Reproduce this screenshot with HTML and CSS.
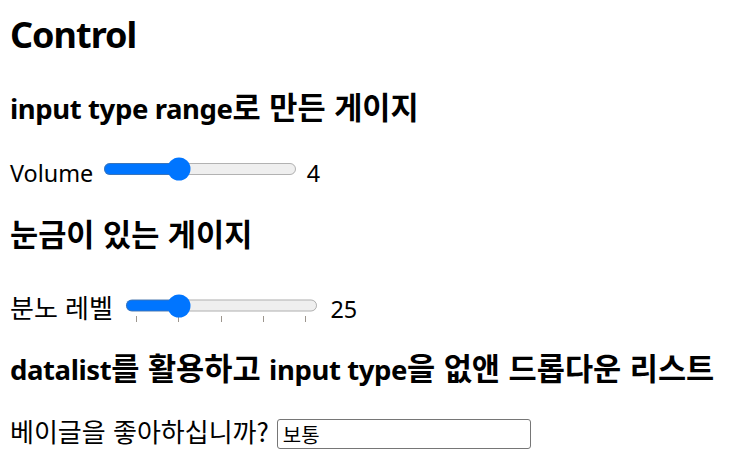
FILE: index.html
```html
<!DOCTYPE html>
<html lang="ko">
<head>
<meta charset="utf-8">
<title>Control</title>
<link rel="stylesheet" href="styles.css">
</head>
<body>
<h1 class="title" lang="en">Control</h1>

<h3 class="section section-first"><span class="en" lang="en">input type range</span>로 만든 게이지</h3>
<div class="row row-volume">
  <label class="label" for="volume"><span class="en" lang="en">Volume</span></label>
  <input class="range range-volume" type="range" id="volume" min="1" max="9" value="4">
  <output class="value" for="volume"><span class="en">4</span></output>
</div>

<h3 class="section section-ticks">눈금이 있는 게이지</h3>
<div class="row row-anger">
  <label class="label" for="anger">분노 레벨</label>
  <input class="range range-ticks" type="range" id="anger" min="0" max="100" value="25" list="levels">
  <datalist id="levels">
    <option value="0"></option>
    <option value="25"></option>
    <option value="50"></option>
    <option value="75"></option>
    <option value="100"></option>
  </datalist>
  <output class="value" for="anger"><span class="en">25</span></output>
</div>

<h3 class="section section-list"><span class="en" lang="en">datalist</span>를 활용하고 <span class="en" lang="en">input type</span>을 없앤 드롭다운 리스트</h3>
<div class="row row-bagel">
  <label class="label" for="bagel">베이글을 좋아하십니까?</label>
  <input class="text" type="text" id="bagel" list="answers" value="보통">
  <datalist id="answers">
    <option value="매우 좋음"></option>
    <option value="좋음"></option>
    <option value="보통"></option>
    <option value="싫음"></option>
  </datalist>
</div>
</body>
</html>
```

FILE: styles.css
```css
html,
body {
  margin: 0;
  padding: 0;
  background: #ffffff;
}

body {
  padding: 8px 10px 0;
  font-family: "Noto Sans CJK KR", "Noto Sans", sans-serif;
  font-size: 26px;
  color: #000000;
}

.en {
  font-family: "Noto Sans", "Noto Sans CJK KR", sans-serif;
  font-size: 0.9em;
  line-height: 1;
}

.title {
  margin: 0;
  padding-top: 3px;
  font-family: "Noto Sans", sans-serif;
  font-size: 36px;
  line-height: 48px;
  font-weight: 700;
  letter-spacing: -1px;
}

.section {
  margin: 0;
  font-size: 30.6px;
  line-height: 40px;
  font-weight: 700;
  white-space: nowrap;
}

.section .en {
  letter-spacing: -0.015em;
}

.section-first {
  margin-top: 27px;
}

.section-ticks {
  margin-top: 24px;
}

.section-list {
  margin-top: 22px;
}

.row {
  display: flex;
  align-items: flex-start;
  gap: 12px;
  line-height: 36px;
}

.row-volume {
  margin-top: 27px;
  height: 36px;
  gap: 10px;
}

.row-anger {
  margin-top: 36px;
  height: 36px;
}

.row-bagel {
  margin-top: 26px;
  gap: 8px;
}

.label,
.value {
  display: block;
  white-space: nowrap;
}

.range {
  zoom: 1.5;
  width: 129px;
  margin: 0;
}

.range-volume {
  margin-top: 2.667px;
}

.text {
  box-sizing: border-box;
  width: 254px;
  height: 30px;
  margin: 6px 0 0;
  padding: 0 5px;
  border: 1px solid #767676;
  border-radius: 3px;
  font-family: "Noto Sans CJK KR", sans-serif;
  font-size: 20px;
  color: #000000;
  background: #ffffff;
}

.text::-webkit-calendar-picker-indicator {
  display: none !important;
}
```
